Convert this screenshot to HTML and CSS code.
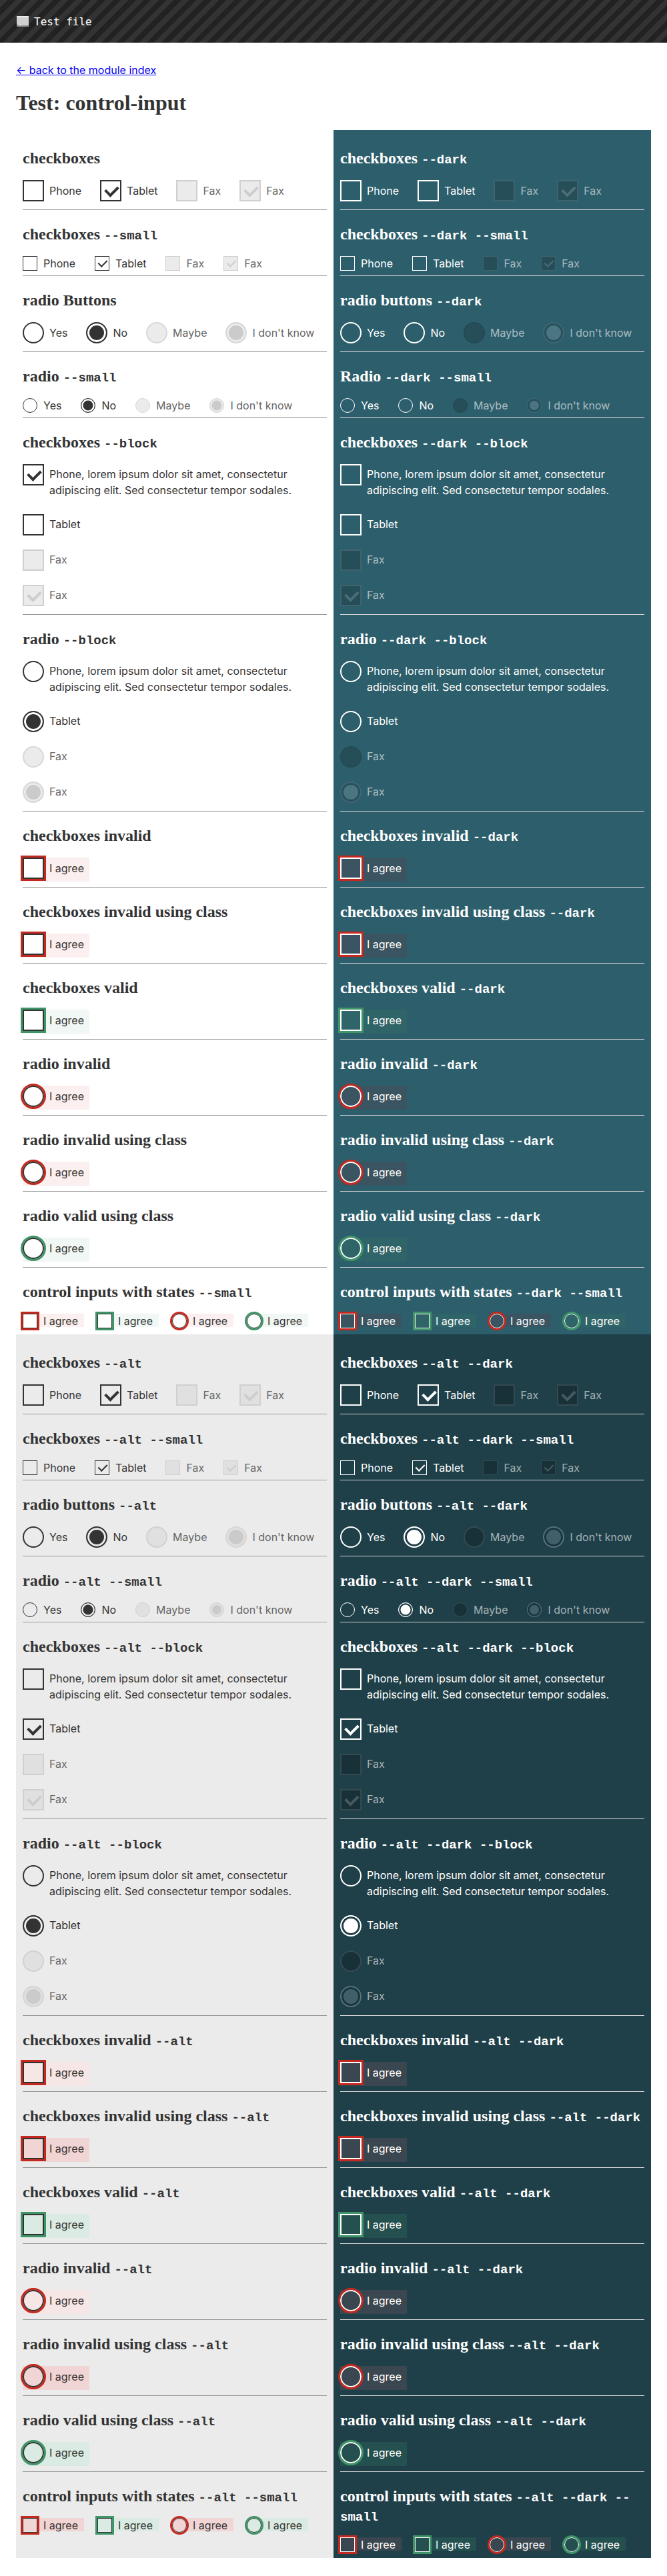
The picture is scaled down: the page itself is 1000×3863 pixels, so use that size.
FILE: index.html
```html
<!DOCTYPE html>
<html lang="en">
<head>
<meta charset="utf-8">
<title>Test: control-input</title>
<link rel="stylesheet" href="styles.css">
</head>
<body>
<header class="top">
  <svg class="top-icon" width="20" height="18" viewBox="0 0 20 18"><rect x="1" y="1" width="18" height="15" fill="#cfcfcf"/><rect x="1" y="1" width="18" height="2" fill="#ededed"/><path d="M1 13 Q5 17 9 15 L19 15 L19 17 L1 17 Z" fill="#8e8e8e"/></svg>
  <span class="top-title">Test file</span>
</header>
<main class="wrap">
  <p class="back"><a href="#">&larr; back to the module index</a></p>
  <h1>Test: control-input</h1>
  <div class="grid">

    <!-- LIGHT -->
    <div class="col">
      <section class="sec"><h2>checkboxes</h2>
        <div class="row">
          <label class="ci"><span class="box cb"></span><span class="t">Phone</span></label>
          <label class="ci"><span class="box cb on"></span><span class="t">Tablet</span></label>
          <label class="ci dis"><span class="box cb"></span><span class="t">Fax</span></label>
          <label class="ci dis"><span class="box cb on"></span><span class="t">Fax</span></label>
        </div></section>
      <section class="sec"><h2>checkboxes <code>--small</code></h2>
        <div class="row sm">
          <label class="ci"><span class="box cb"></span><span class="t">Phone</span></label>
          <label class="ci"><span class="box cb on"></span><span class="t">Tablet</span></label>
          <label class="ci dis"><span class="box cb"></span><span class="t">Fax</span></label>
          <label class="ci dis"><span class="box cb on"></span><span class="t">Fax</span></label>
        </div></section>
      <section class="sec"><h2>radio Buttons</h2>
        <div class="row">
          <label class="ci"><span class="box rd"></span><span class="t">Yes</span></label>
          <label class="ci"><span class="box rd on"></span><span class="t">No</span></label>
          <label class="ci dis"><span class="box rd"></span><span class="t">Maybe</span></label>
          <label class="ci dis"><span class="box rd on"></span><span class="t">I don't know</span></label>
        </div></section>
      <section class="sec"><h2>radio <code>--small</code></h2>
        <div class="row sm">
          <label class="ci"><span class="box rd"></span><span class="t">Yes</span></label>
          <label class="ci"><span class="box rd on"></span><span class="t">No</span></label>
          <label class="ci dis"><span class="box rd"></span><span class="t">Maybe</span></label>
          <label class="ci dis"><span class="box rd on"></span><span class="t">I don't know</span></label>
        </div></section>
      <section class="sec"><h2>checkboxes <code>--block</code></h2>
        <div class="blk">
          <label class="ci"><span class="box cb on"></span><span class="t">Phone, lorem ipsum dolor sit amet, consectetur adipiscing elit. Sed consectetur tempor sodales.</span></label>
          <label class="ci"><span class="box cb"></span><span class="t">Tablet</span></label>
          <label class="ci dis"><span class="box cb"></span><span class="t">Fax</span></label>
          <label class="ci dis"><span class="box cb on"></span><span class="t">Fax</span></label>
        </div></section>
      <section class="sec"><h2>radio <code>--block</code></h2>
        <div class="blk">
          <label class="ci"><span class="box rd"></span><span class="t">Phone, lorem ipsum dolor sit amet, consectetur adipiscing elit. Sed consectetur tempor sodales.</span></label>
          <label class="ci"><span class="box rd on"></span><span class="t">Tablet</span></label>
          <label class="ci dis"><span class="box rd"></span><span class="t">Fax</span></label>
          <label class="ci dis"><span class="box rd on"></span><span class="t">Fax</span></label>
        </div></section>
      <section class="sec"><h2>checkboxes invalid</h2>
        <div class="row"><label class="ci st inv"><span class="box cb"></span><span class="t">I agree</span></label></div></section>
      <section class="sec"><h2>checkboxes invalid using class</h2>
        <div class="row"><label class="ci st inv"><span class="box cb"></span><span class="t">I agree</span></label></div></section>
      <section class="sec"><h2>checkboxes valid</h2>
        <div class="row"><label class="ci st val"><span class="box cb"></span><span class="t">I agree</span></label></div></section>
      <section class="sec"><h2>radio invalid</h2>
        <div class="row"><label class="ci st inv"><span class="box rd"></span><span class="t">I agree</span></label></div></section>
      <section class="sec"><h2>radio invalid using class</h2>
        <div class="row"><label class="ci st inv"><span class="box rd"></span><span class="t">I agree</span></label></div></section>
      <section class="sec"><h2>radio valid using class</h2>
        <div class="row"><label class="ci st val"><span class="box rd"></span><span class="t">I agree</span></label></div></section>
      <section class="sec"><h2>control inputs with states <code>--small</code></h2>
        <div class="row sm">
          <label class="ci st inv"><span class="box cb"></span><span class="t">I agree</span></label>
          <label class="ci st val"><span class="box cb"></span><span class="t">I agree</span></label>
          <label class="ci st inv"><span class="box rd"></span><span class="t">I agree</span></label>
          <label class="ci st val"><span class="box rd"></span><span class="t">I agree</span></label>
        </div></section>
    </div>

    <!-- DARK -->
    <div class="col dark">
      <section class="sec"><h2>checkboxes <code>--dark</code></h2>
        <div class="row">
          <label class="ci"><span class="box cb"></span><span class="t">Phone</span></label>
          <label class="ci"><span class="box cb"></span><span class="t">Tablet</span></label>
          <label class="ci dis"><span class="box cb"></span><span class="t">Fax</span></label>
          <label class="ci dis"><span class="box cb on"></span><span class="t">Fax</span></label>
        </div></section>
      <section class="sec"><h2>checkboxes <code>--dark --small</code></h2>
        <div class="row sm">
          <label class="ci"><span class="box cb"></span><span class="t">Phone</span></label>
          <label class="ci"><span class="box cb"></span><span class="t">Tablet</span></label>
          <label class="ci dis"><span class="box cb"></span><span class="t">Fax</span></label>
          <label class="ci dis"><span class="box cb on"></span><span class="t">Fax</span></label>
        </div></section>
      <section class="sec"><h2>radio buttons <code>--dark</code></h2>
        <div class="row">
          <label class="ci"><span class="box rd"></span><span class="t">Yes</span></label>
          <label class="ci"><span class="box rd"></span><span class="t">No</span></label>
          <label class="ci dis"><span class="box rd"></span><span class="t">Maybe</span></label>
          <label class="ci dis"><span class="box rd on"></span><span class="t">I don't know</span></label>
        </div></section>
      <section class="sec"><h2>Radio <code>--dark --small</code></h2>
        <div class="row sm">
          <label class="ci"><span class="box rd"></span><span class="t">Yes</span></label>
          <label class="ci"><span class="box rd"></span><span class="t">No</span></label>
          <label class="ci dis"><span class="box rd"></span><span class="t">Maybe</span></label>
          <label class="ci dis"><span class="box rd on"></span><span class="t">I don't know</span></label>
        </div></section>
      <section class="sec"><h2>checkboxes <code>--dark --block</code></h2>
        <div class="blk">
          <label class="ci"><span class="box cb"></span><span class="t">Phone, lorem ipsum dolor sit amet, consectetur adipiscing elit. Sed consectetur tempor sodales.</span></label>
          <label class="ci"><span class="box cb"></span><span class="t">Tablet</span></label>
          <label class="ci dis"><span class="box cb"></span><span class="t">Fax</span></label>
          <label class="ci dis"><span class="box cb on"></span><span class="t">Fax</span></label>
        </div></section>
      <section class="sec"><h2>radio <code>--dark --block</code></h2>
        <div class="blk">
          <label class="ci"><span class="box rd"></span><span class="t">Phone, lorem ipsum dolor sit amet, consectetur adipiscing elit. Sed consectetur tempor sodales.</span></label>
          <label class="ci"><span class="box rd"></span><span class="t">Tablet</span></label>
          <label class="ci dis"><span class="box rd"></span><span class="t">Fax</span></label>
          <label class="ci dis"><span class="box rd on"></span><span class="t">Fax</span></label>
        </div></section>
      <section class="sec"><h2>checkboxes invalid <code>--dark</code></h2>
        <div class="row"><label class="ci st inv"><span class="box cb"></span><span class="t">I agree</span></label></div></section>
      <section class="sec"><h2>checkboxes invalid using class <code>--dark</code></h2>
        <div class="row"><label class="ci st inv"><span class="box cb"></span><span class="t">I agree</span></label></div></section>
      <section class="sec"><h2>checkboxes valid <code>--dark</code></h2>
        <div class="row"><label class="ci st val"><span class="box cb"></span><span class="t">I agree</span></label></div></section>
      <section class="sec"><h2>radio invalid <code>--dark</code></h2>
        <div class="row"><label class="ci st inv"><span class="box rd"></span><span class="t">I agree</span></label></div></section>
      <section class="sec"><h2>radio invalid using class <code>--dark</code></h2>
        <div class="row"><label class="ci st inv"><span class="box rd"></span><span class="t">I agree</span></label></div></section>
      <section class="sec"><h2>radio valid using class <code>--dark</code></h2>
        <div class="row"><label class="ci st val"><span class="box rd"></span><span class="t">I agree</span></label></div></section>
      <section class="sec"><h2>control inputs with states <code>--dark --small</code></h2>
        <div class="row sm">
          <label class="ci st inv"><span class="box cb"></span><span class="t">I agree</span></label>
          <label class="ci st val"><span class="box cb"></span><span class="t">I agree</span></label>
          <label class="ci st inv"><span class="box rd"></span><span class="t">I agree</span></label>
          <label class="ci st val"><span class="box rd"></span><span class="t">I agree</span></label>
        </div></section>
    </div>

    <!-- ALT LIGHT -->
    <div class="col alt">
      <section class="sec"><h2>checkboxes <code>--alt</code></h2>
        <div class="row">
          <label class="ci"><span class="box cb"></span><span class="t">Phone</span></label>
          <label class="ci"><span class="box cb on"></span><span class="t">Tablet</span></label>
          <label class="ci dis"><span class="box cb"></span><span class="t">Fax</span></label>
          <label class="ci dis"><span class="box cb on"></span><span class="t">Fax</span></label>
        </div></section>
      <section class="sec"><h2>checkboxes <code>--alt --small</code></h2>
        <div class="row sm">
          <label class="ci"><span class="box cb"></span><span class="t">Phone</span></label>
          <label class="ci"><span class="box cb on"></span><span class="t">Tablet</span></label>
          <label class="ci dis"><span class="box cb"></span><span class="t">Fax</span></label>
          <label class="ci dis"><span class="box cb on"></span><span class="t">Fax</span></label>
        </div></section>
      <section class="sec"><h2>radio buttons <code>--alt</code></h2>
        <div class="row">
          <label class="ci"><span class="box rd"></span><span class="t">Yes</span></label>
          <label class="ci"><span class="box rd on"></span><span class="t">No</span></label>
          <label class="ci dis"><span class="box rd"></span><span class="t">Maybe</span></label>
          <label class="ci dis"><span class="box rd on"></span><span class="t">I don't know</span></label>
        </div></section>
      <section class="sec"><h2>radio <code>--alt --small</code></h2>
        <div class="row sm">
          <label class="ci"><span class="box rd"></span><span class="t">Yes</span></label>
          <label class="ci"><span class="box rd on"></span><span class="t">No</span></label>
          <label class="ci dis"><span class="box rd"></span><span class="t">Maybe</span></label>
          <label class="ci dis"><span class="box rd on"></span><span class="t">I don't know</span></label>
        </div></section>
      <section class="sec"><h2>checkboxes <code>--alt --block</code></h2>
        <div class="blk">
          <label class="ci"><span class="box cb"></span><span class="t">Phone, lorem ipsum dolor sit amet, consectetur adipiscing elit. Sed consectetur tempor sodales.</span></label>
          <label class="ci"><span class="box cb on"></span><span class="t">Tablet</span></label>
          <label class="ci dis"><span class="box cb"></span><span class="t">Fax</span></label>
          <label class="ci dis"><span class="box cb on"></span><span class="t">Fax</span></label>
        </div></section>
      <section class="sec"><h2>radio <code>--alt --block</code></h2>
        <div class="blk">
          <label class="ci"><span class="box rd"></span><span class="t">Phone, lorem ipsum dolor sit amet, consectetur adipiscing elit. Sed consectetur tempor sodales.</span></label>
          <label class="ci"><span class="box rd on"></span><span class="t">Tablet</span></label>
          <label class="ci dis"><span class="box rd"></span><span class="t">Fax</span></label>
          <label class="ci dis"><span class="box rd on"></span><span class="t">Fax</span></label>
        </div></section>
      <section class="sec"><h2>checkboxes invalid <code>--alt</code></h2>
        <div class="row"><label class="ci st inv"><span class="box cb"></span><span class="t">I agree</span></label></div></section>
      <section class="sec"><h2>checkboxes invalid using class <code>--alt</code></h2>
        <div class="row"><label class="ci st inv cls"><span class="box cb"></span><span class="t">I agree</span></label></div></section>
      <section class="sec"><h2>checkboxes valid <code>--alt</code></h2>
        <div class="row"><label class="ci st val"><span class="box cb"></span><span class="t">I agree</span></label></div></section>
      <section class="sec"><h2>radio invalid <code>--alt</code></h2>
        <div class="row"><label class="ci st inv"><span class="box rd"></span><span class="t">I agree</span></label></div></section>
      <section class="sec"><h2>radio invalid using class <code>--alt</code></h2>
        <div class="row"><label class="ci st inv cls"><span class="box rd"></span><span class="t">I agree</span></label></div></section>
      <section class="sec"><h2>radio valid using class <code>--alt</code></h2>
        <div class="row"><label class="ci st val"><span class="box rd"></span><span class="t">I agree</span></label></div></section>
      <section class="sec"><h2>control inputs with states <code>--alt --small</code></h2>
        <div class="row sm">
          <label class="ci st inv cls"><span class="box cb"></span><span class="t">I agree</span></label>
          <label class="ci st val"><span class="box cb"></span><span class="t">I agree</span></label>
          <label class="ci st inv cls"><span class="box rd"></span><span class="t">I agree</span></label>
          <label class="ci st val"><span class="box rd"></span><span class="t">I agree</span></label>
        </div></section>
    </div>

    <!-- ALT DARK -->
    <div class="col alt dark">
      <section class="sec"><h2>checkboxes <code>--alt --dark</code></h2>
        <div class="row">
          <label class="ci"><span class="box cb"></span><span class="t">Phone</span></label>
          <label class="ci"><span class="box cb on"></span><span class="t">Tablet</span></label>
          <label class="ci dis"><span class="box cb"></span><span class="t">Fax</span></label>
          <label class="ci dis"><span class="box cb on"></span><span class="t">Fax</span></label>
        </div></section>
      <section class="sec"><h2>checkboxes <code>--alt --dark --small</code></h2>
        <div class="row sm">
          <label class="ci"><span class="box cb"></span><span class="t">Phone</span></label>
          <label class="ci"><span class="box cb on"></span><span class="t">Tablet</span></label>
          <label class="ci dis"><span class="box cb"></span><span class="t">Fax</span></label>
          <label class="ci dis"><span class="box cb on"></span><span class="t">Fax</span></label>
        </div></section>
      <section class="sec"><h2>radio buttons <code>--alt --dark</code></h2>
        <div class="row">
          <label class="ci"><span class="box rd"></span><span class="t">Yes</span></label>
          <label class="ci"><span class="box rd on"></span><span class="t">No</span></label>
          <label class="ci dis"><span class="box rd"></span><span class="t">Maybe</span></label>
          <label class="ci dis"><span class="box rd on"></span><span class="t">I don't know</span></label>
        </div></section>
      <section class="sec"><h2>radio <code>--alt --dark --small</code></h2>
        <div class="row sm">
          <label class="ci"><span class="box rd"></span><span class="t">Yes</span></label>
          <label class="ci"><span class="box rd on"></span><span class="t">No</span></label>
          <label class="ci dis"><span class="box rd"></span><span class="t">Maybe</span></label>
          <label class="ci dis"><span class="box rd on"></span><span class="t">I don't know</span></label>
        </div></section>
      <section class="sec"><h2>checkboxes <code>--alt --dark --block</code></h2>
        <div class="blk">
          <label class="ci"><span class="box cb"></span><span class="t">Phone, lorem ipsum dolor sit amet, consectetur adipiscing elit. Sed consectetur tempor sodales.</span></label>
          <label class="ci"><span class="box cb on"></span><span class="t">Tablet</span></label>
          <label class="ci dis"><span class="box cb"></span><span class="t">Fax</span></label>
          <label class="ci dis"><span class="box cb on"></span><span class="t">Fax</span></label>
        </div></section>
      <section class="sec"><h2>radio <code>--alt --dark --block</code></h2>
        <div class="blk">
          <label class="ci"><span class="box rd"></span><span class="t">Phone, lorem ipsum dolor sit amet, consectetur adipiscing elit. Sed consectetur tempor sodales.</span></label>
          <label class="ci"><span class="box rd on"></span><span class="t">Tablet</span></label>
          <label class="ci dis"><span class="box rd"></span><span class="t">Fax</span></label>
          <label class="ci dis"><span class="box rd on"></span><span class="t">Fax</span></label>
        </div></section>
      <section class="sec"><h2>checkboxes invalid <code>--alt --dark</code></h2>
        <div class="row"><label class="ci st inv"><span class="box cb"></span><span class="t">I agree</span></label></div></section>
      <section class="sec"><h2>checkboxes invalid using class <code>--alt --dark</code></h2>
        <div class="row"><label class="ci st inv"><span class="box cb"></span><span class="t">I agree</span></label></div></section>
      <section class="sec"><h2>checkboxes valid <code>--alt --dark</code></h2>
        <div class="row"><label class="ci st val"><span class="box cb"></span><span class="t">I agree</span></label></div></section>
      <section class="sec"><h2>radio invalid <code>--alt --dark</code></h2>
        <div class="row"><label class="ci st inv"><span class="box rd"></span><span class="t">I agree</span></label></div></section>
      <section class="sec"><h2>radio invalid using class <code>--alt --dark</code></h2>
        <div class="row"><label class="ci st inv"><span class="box rd"></span><span class="t">I agree</span></label></div></section>
      <section class="sec"><h2>radio valid using class <code>--alt --dark</code></h2>
        <div class="row"><label class="ci st val"><span class="box rd"></span><span class="t">I agree</span></label></div></section>
      <section class="sec"><h2>control inputs with states <code>--alt --dark --small</code></h2>
        <div class="row sm">
          <label class="ci st inv"><span class="box cb"></span><span class="t">I agree</span></label>
          <label class="ci st val"><span class="box cb"></span><span class="t">I agree</span></label>
          <label class="ci st inv"><span class="box rd"></span><span class="t">I agree</span></label>
          <label class="ci st val"><span class="box rd"></span><span class="t">I agree</span></label>
        </div></section>
    </div>

  </div>
</main>
</body>
</html>
```

FILE: styles.css
```css
* { box-sizing: border-box; }
html, body { margin: 0; padding: 0; background: #fff; }
body { font-family: Inter, "Liberation Sans", sans-serif; color: #333; }

.top {
  height: 64px;
  display: flex;
  align-items: center;
  gap: 7px;
  padding-left: 24px;
  background: repeating-linear-gradient(-45deg, #222 0 8px, #333 8px 16px);
}
.top-icon { display: block; }
.top-title { font-family: "DejaVu Sans Mono", "Liberation Mono", monospace; font-size: 16px; color: #fff; }

.wrap { padding: 0 24px 34px; }
.back { margin: 31px 0 0; font-size: 16px; line-height: 20px; }
.back a { color: #00e; }
h1 { margin: 19px 0 21px; font: 700 32px/40px "Liberation Serif", serif; color: #333; }

.grid { display: grid; grid-template-columns: 1fr 1fr; }
.col { padding: 6px 10px 2px; }
.dark { background: #2d5e6b; color: #fff; }
.alt { background: #ebebeb; }
.alt.dark { background: #1f3f49; }

.sec { padding-top: 22px; border-bottom: 1px solid #999; }
.sec:last-child { border-bottom: 0; }
.dark .sec { border-bottom-color: #d4d4d4; }

h2 { margin: 0 0 18px; font: 700 24px/29px "Liberation Serif", serif; color: #333; }
.dark h2 { color: #fff; }
h2 code { font-family: "Liberation Mono", monospace; font-size: 19px; font-weight: 700; line-height: 1; }

.row { display: flex; flex-wrap: wrap; gap: 0 20px; padding-bottom: 12px; }
.row.sm { padding-bottom: 7px; }

.ci { display: inline-flex; align-items: center; gap: 8px; padding-right: 8px; font-size: 16px; line-height: 32px; }
.sm .ci { gap: 9px; line-height: 22px; padding-right: 9px; }

.box { position: relative; flex: none; width: 32px; height: 32px; border: 2px solid #333; background: #fff; }
.sm .box { width: 22px; height: 22px; border-width: 1px; }
.rd { border-radius: 50%; }
.sm .rd { border-width: 1.5px; }

.cb.on::after {
  content: "";
  position: absolute;
  left: 9px; top: 3px;
  width: 9px; height: 15px;
  border: solid #333;
  border-width: 0 4px 4px 0;
  transform: rotate(45deg);
}
.sm .cb.on::after { left: 7px; top: 2px; width: 6px; height: 11px; border-width: 0 2px 2px 0; }

.rd.on { background: #333; box-shadow: inset 0 0 0 3px #fff; }
.sm .rd.on { box-shadow: inset 0 0 0 2.5px #fff; }

.dis .t { color: #666; }
.dis .box { background: #ebebeb; border-color: #cfcfcf; }
.dis .rd { border-color: #d8d8d8; }
.dis .cb.on::after { border-color: #cdcdcd; }
.dis .rd.on { background: #cbcbcb; box-shadow: inset 0 0 0 3px #ebebeb; }
.sm .dis .rd.on { box-shadow: inset 0 0 0 2.5px #ebebeb; }

/* block */
.blk { display: flex; flex-direction: column; align-items: flex-start; gap: 21px; padding-bottom: 12px; }
.blk .ci { align-items: flex-start; line-height: 24px; padding-right: 0; }
.blk .t { padding: 3px 0; max-width: 372px; }

/* states: the tinted label runs 4px below a regular box, and is 2px shorter than a small one */
.st { align-items: flex-start; --stbg: #fbf0ef; background-color: var(--stbg); box-shadow: 0 4px 0 var(--stbg); }
.sm .st { background: linear-gradient(var(--stbg), var(--stbg)) 0 0 / 100% 20px no-repeat; box-shadow: none; }
.st.inv .box { outline: 3px solid #c4291f; }
.st.val { --stbg: #f0f7f4; }
.st.val .box { outline: 3px solid #3f9468; }

/* dark */
.dark .box { background: transparent; border-color: #fff; }
.dark .dis .t { color: rgba(255,255,255,0.6); }
.dark .dis .box { background: rgba(0,0,0,0.17); border-color: rgba(255,255,255,0.12); }
.dark .dis .rd { border-color: rgba(0,0,0,0.06); }
.dark .dis .cb.on::after { border-color: rgba(255,255,255,0.18); }
.dark .dis .rd.on { background: #4b7581; box-shadow: inset 0 0 0 3px #26515d; border-color: rgba(0,0,0,0.12); }
.dark .st.inv { --stbg: #3a5461; }
.dark .st.val { --stbg: #2f6468; }

/* alt light */
.alt .box { background: transparent; }
.alt .rd.on { background: #333; box-shadow: inset 0 0 0 3px #ebebeb; }
.alt .sm .rd.on { box-shadow: inset 0 0 0 2.5px #ebebeb; }
.alt .dis .box { background: #e0e0e0; border-color: #d0d0d0; }
.alt .dis .rd.on { background: #cbcbcb; box-shadow: inset 0 0 0 3px #e0e0e0; border-color: #d6d6d6; }
.alt .st.inv { --stbg: #f6e6e6; }
.alt .st.inv.cls { --stbg: #f1d4d4; }
.alt .st.val { --stbg: #d9ebe2; }

/* alt dark */
.alt.dark .box { background: transparent; border-color: #fff; }
.alt.dark .cb.on::after { border-color: #fff; }
.alt.dark .rd.on { background: #fff; box-shadow: inset 0 0 0 3px #1f3f49; }
.alt.dark .sm .rd.on { box-shadow: inset 0 0 0 2.5px #1f3f49; }
.alt.dark .dis .box { background: rgba(0,0,0,0.22); border-color: rgba(255,255,255,0.12); }
.alt.dark .dis .cb.on::after { border-color: rgba(255,255,255,0.2); }
.alt.dark .dis .rd.on { background: #405f69; box-shadow: inset 0 0 0 3px #193640; }
.alt.dark .st.inv { --stbg: #3a4650; }
.alt.dark .st.val { --stbg: #24504f; }
```
